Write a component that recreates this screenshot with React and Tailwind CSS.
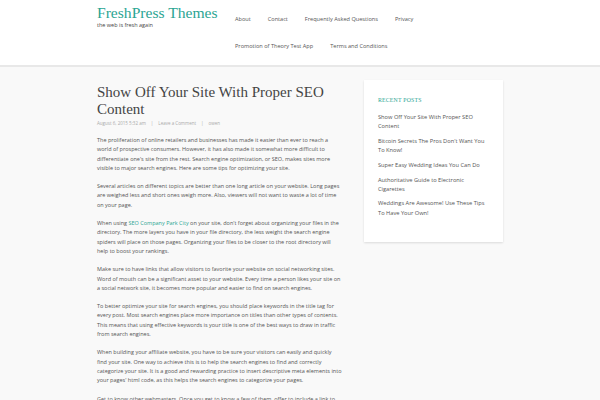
import React from 'react';

const serif = { fontFamily: '"Liberation Serif", "DejaVu Serif", serif' };

const navTop = ['About', 'Contact', 'Frequently Asked Questions', 'Privacy'];
const navBottom = ['Promotion of Theory Test App', 'Terms and Conditions'];

const recent = [
  'Show Off Your Site With Proper SEO Content',
  "Bitcoin Secrets The Pros Don't Want You To Know!",
  'Super Easy Wedding Ideas You Can Do',
  'Authoritative Guide to Electronic Cigarettes',
  'Weddings Are Awesome! Use These Tips To Have Your Own!',
];

const App = () => {
  return (
    <div className="w-[600px] h-[400px] overflow-hidden bg-[#f9f9f9] text-[#555] font-['Open_Sans',sans-serif]">
      <header className="h-[67px] bg-white border-b-2 border-[#e8e8e8]">
        <div className="flex pl-[97px]">
          <div className="w-[138px] pt-[4px]">
            <h1 style={serif} className="text-[15.6px] leading-[18px] text-[#2ba593] whitespace-nowrap">FreshPress Themes</h1>
            <p className="text-[5.5px] leading-[7px] text-[#444]">the web is fresh again</p>
          </div>
          <nav className="w-[260px] text-[5.6px] text-[#555]">
            <ul className="flex gap-x-[17px] pt-[15px] h-[42px]">
              {navTop.map((n) => (
                <li key={n}>{n}</li>
              ))}
            </ul>
            <ul className="flex gap-x-[17px]">
              {navBottom.map((n) => (
                <li key={n}>{n}</li>
              ))}
            </ul>
          </nav>
        </div>
      </header>

      <div className="flex pl-[97px] gap-[22px] pt-[12px]">
        <main className="w-[245px]">
          <h2 style={serif} className="text-[15px] leading-[17px] text-[#444] pt-[5px]">
            Show Off Your Site With Proper SEO Content
          </h2>
          <div className="text-[4.5px] leading-[6px] text-[#aaa] mt-[2px] flex gap-[5px]">
            <span>August 6, 2015 5:32 am</span>
            <span>|</span>
            <span>Leave a Comment</span>
            <span>|</span>
            <span>owen</span>
          </div>
          <div className="text-[5.5px] leading-[9.3px] text-[#555] mt-[10px] flex flex-col gap-[9px]">
            <p>
              The proliferation of online retailers and businesses has made it easier than ever to reach a world of prospective consumers. However, it has also made it somewhat more difficult to differentiate one's site from the rest. Search engine optimization, or SEO, makes sites more visible to major search engines. Here are some tips for optimizing your site.
            </p>
            <p>
              Several articles on different topics are better than one long article on your website. Long pages are weighed less and short ones weigh more. Also, viewers will not want to waste a lot of time on your page.
            </p>
            <p>
              When using <a className="text-[#2ba593]">SEO Company Park City</a> on your site, don't forget about organizing your files in the directory. The more layers you have in your file directory, the less weight the search engine spiders will place on those pages. Organizing your files to be closer to the root directory will help to boost your rankings.
            </p>
            <p>
              Make sure to have links that allow visitors to favorite your website on social networking sites. Word of mouth can be a significant asset to your website. Every time a person likes your site on a social network site, it becomes more popular and easier to find on search engines.
            </p>
            <p>
              To better optimize your site for search engines, you should place keywords in the title tag for every post. Most search engines place more importance on titles than other types of contents. This means that using effective keywords is your title is one of the best ways to draw in traffic from search engines.
            </p>
            <p>
              When building your affiliate website, you have to be sure your visitors can easily and quickly find your site. One way to achieve this is to help the search engines to find and correctly categorize your site. It is a good and rewarding practice to insert descriptive meta elements into your pages' html code, as this helps the search engines to categorize your pages.
            </p>
            <p>
              Get to know other webmasters. Once you get to know a few of them, offer to include a link to their site on yours.
            </p>
          </div>
        </main>

        <aside className="w-[139px] self-start mt-[1px] bg-white shadow-[0_1px_2px_rgba(0,0,0,0.12)] pl-[14px] pr-[13px] pt-[16px] pb-[24px]">
          <h3 style={serif} className="text-[5.8px] leading-[8px] uppercase text-[#2ba593] tracking-[0.2px]">Recent Posts</h3>
          <ul className="mt-[9px] flex flex-col gap-[5.5px] text-[5.7px] leading-[9.2px] text-[#555]">
            {recent.map((r) => (
              <li key={r}>{r}</li>
            ))}
          </ul>
        </aside>
      </div>
    </div>
  );
};

export default App;
